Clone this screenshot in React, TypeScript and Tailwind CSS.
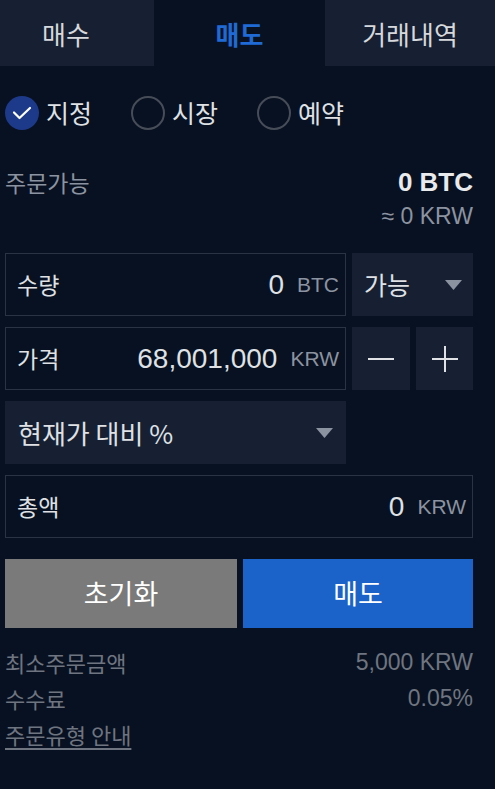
const KR = "font-['Noto_Sans_CJK_KR','Noto_Sans',sans-serif]";
const NUM = "font-['Liberation_Sans','Noto_Sans_CJK_KR',sans-serif]";

function Caret() {
  return (
    <svg width="17" height="10" viewBox="0 0 17 10" className="shrink-0">
      <path d="M0 0 H17 L8.5 10 Z" fill="#8c93a0" />
    </svg>
  );
}

function Radio({ label, checked }: { label: string; checked?: boolean }) {
  return (
    <div className="flex items-center gap-[7px]">
      {checked ? (
        <span className="flex h-[34px] w-[34px] items-center justify-center rounded-full bg-[#1d3a8a]">
          <svg width="20" height="14" viewBox="0 0 20 14">
            <path d="M2 6.5 L7.5 12 L18 2" fill="none" stroke="#ffffff" strokeWidth="2.2" strokeLinecap="round" strokeLinejoin="round" />
          </svg>
        </span>
      ) : (
        <span className="h-[34px] w-[34px] rounded-full border-2 border-[#474d58]" />
      )}
      <span className={`${KR} text-[25px] text-[#dfe1e5]`}>{label}</span>
    </div>
  );
}

function Field({ label, value, unit, wide }: { label: string; value: string; unit: string; wide?: boolean }) {
  return (
    <div className={`flex h-[63px] items-center border border-[#2a3344] pl-[11px] pr-[6px] ${wide ? "w-[468px]" : "w-[341px]"}`}>
      <span className={`${KR} text-[23px] text-[#dfe1e5]`}>{label}</span>
      <span className={`${NUM} ml-auto text-[28px] text-[#dfe1e5]`}>{value}</span>
      <span className={`${NUM} ml-[13px] text-[21px] text-[#8c93a0]`}>{unit}</span>
    </div>
  );
}

export default function App() {
  return (
    <div className="h-[789px] w-[495px] bg-[#081121] text-[#dfe1e5]">
      <div className={`${KR} flex h-[66px] text-[26px]`}>
        <div className="flex w-[154px] items-center justify-center bg-[#172033] pr-[22px] text-[#d6d8dc]">매수</div>
        <div className="flex w-[171px] items-center justify-center font-bold text-[#1f6ad4]">매도</div>
        <div className="flex w-[170px] items-center justify-center bg-[#172033] text-[#d6d8dc]">거래내역</div>
      </div>

      <div className="flex h-[94px] items-center gap-[39px] pl-[5px] pb-[1px]">
        <Radio label="지정" checked />
        <Radio label="시장" />
        <Radio label="예약" />
      </div>

      <div className="flex pl-[5px] pr-[22px] pt-[7px]">
        <span className={`${KR} text-[23px] leading-[30px] text-[#8c93a0]`}>주문가능</span>
        <div className="ml-auto flex flex-col items-end">
          <span className={`${NUM} text-[26px] font-bold leading-[30px] text-[#e9eaec]`}>0 BTC</span>
          <span className={`${NUM} mt-[5px] text-[23px] leading-[28px] text-[#8c93a0]`}>≈ 0 KRW</span>
        </div>
      </div>

      <div className="mt-[23px] flex flex-col gap-[11px] pl-[5px]">
        <div className="flex gap-[6px]">
          <Field label="수량" value="0" unit="BTC" />
          <div className="flex h-[63px] w-[121px] items-center bg-[#172033] pl-[12px] pr-[11px]">
            <span className={`${KR} text-[25px] text-[#dfe1e5]`}>가능</span>
            <span className="ml-auto"><Caret /></span>
          </div>
        </div>
        <div className="flex gap-[6px]">
          <Field label="가격" value="68,001,000" unit="KRW" />
          <div className="flex h-[63px] w-[58px] items-center justify-center bg-[#172033]">
            <svg width="26" height="26" viewBox="0 0 26 26">
              <path d="M0 13 H26" stroke="#dfe1e5" strokeWidth="2" />
            </svg>
          </div>
          <div className="flex h-[63px] w-[57px] items-center justify-center bg-[#172033]">
            <svg width="26" height="26" viewBox="0 0 26 26">
              <path d="M0 13 H26 M13 0 V26" stroke="#dfe1e5" strokeWidth="2" />
            </svg>
          </div>
        </div>
        <div className="flex h-[63px] w-[341px] items-center bg-[#172033] pl-[13px] pr-[13px]">
          <span className={`${KR} text-[26px] text-[#dfe1e5]`}>현재가 대비 %</span>
          <span className="ml-auto"><Caret /></span>
        </div>
        <Field label="총액" value="0" unit="KRW" wide />
      </div>

      <div className={`${KR} mt-[21px] flex gap-[6px] pl-[5px] text-[27px] text-white`}>
        <button className="flex h-[69px] w-[232px] items-center justify-center bg-[#7a7a7a]">초기화</button>
        <button className="flex h-[69px] w-[230px] items-center justify-center bg-[#1b63c8]">매도</button>
      </div>

      <div className="mt-[16px] flex flex-col pl-[5px] pr-[22px] text-[22px] text-[#6f7580]">
        <div className="flex h-[36px] items-center">
          <span className={KR}>최소주문금액</span>
          <span className={`${NUM} ml-auto text-[23px]`}>5,000 KRW</span>
        </div>
        <div className="flex h-[36px] items-center">
          <span className={KR}>수수료</span>
          <span className={`${NUM} ml-auto text-[23px]`}>0.05%</span>
        </div>
        <div className="flex h-[36px] items-center">
          <span className={`${KR} underline underline-offset-[4px]`}>주문유형 안내</span>
        </div>
      </div>
    </div>
  );
}
